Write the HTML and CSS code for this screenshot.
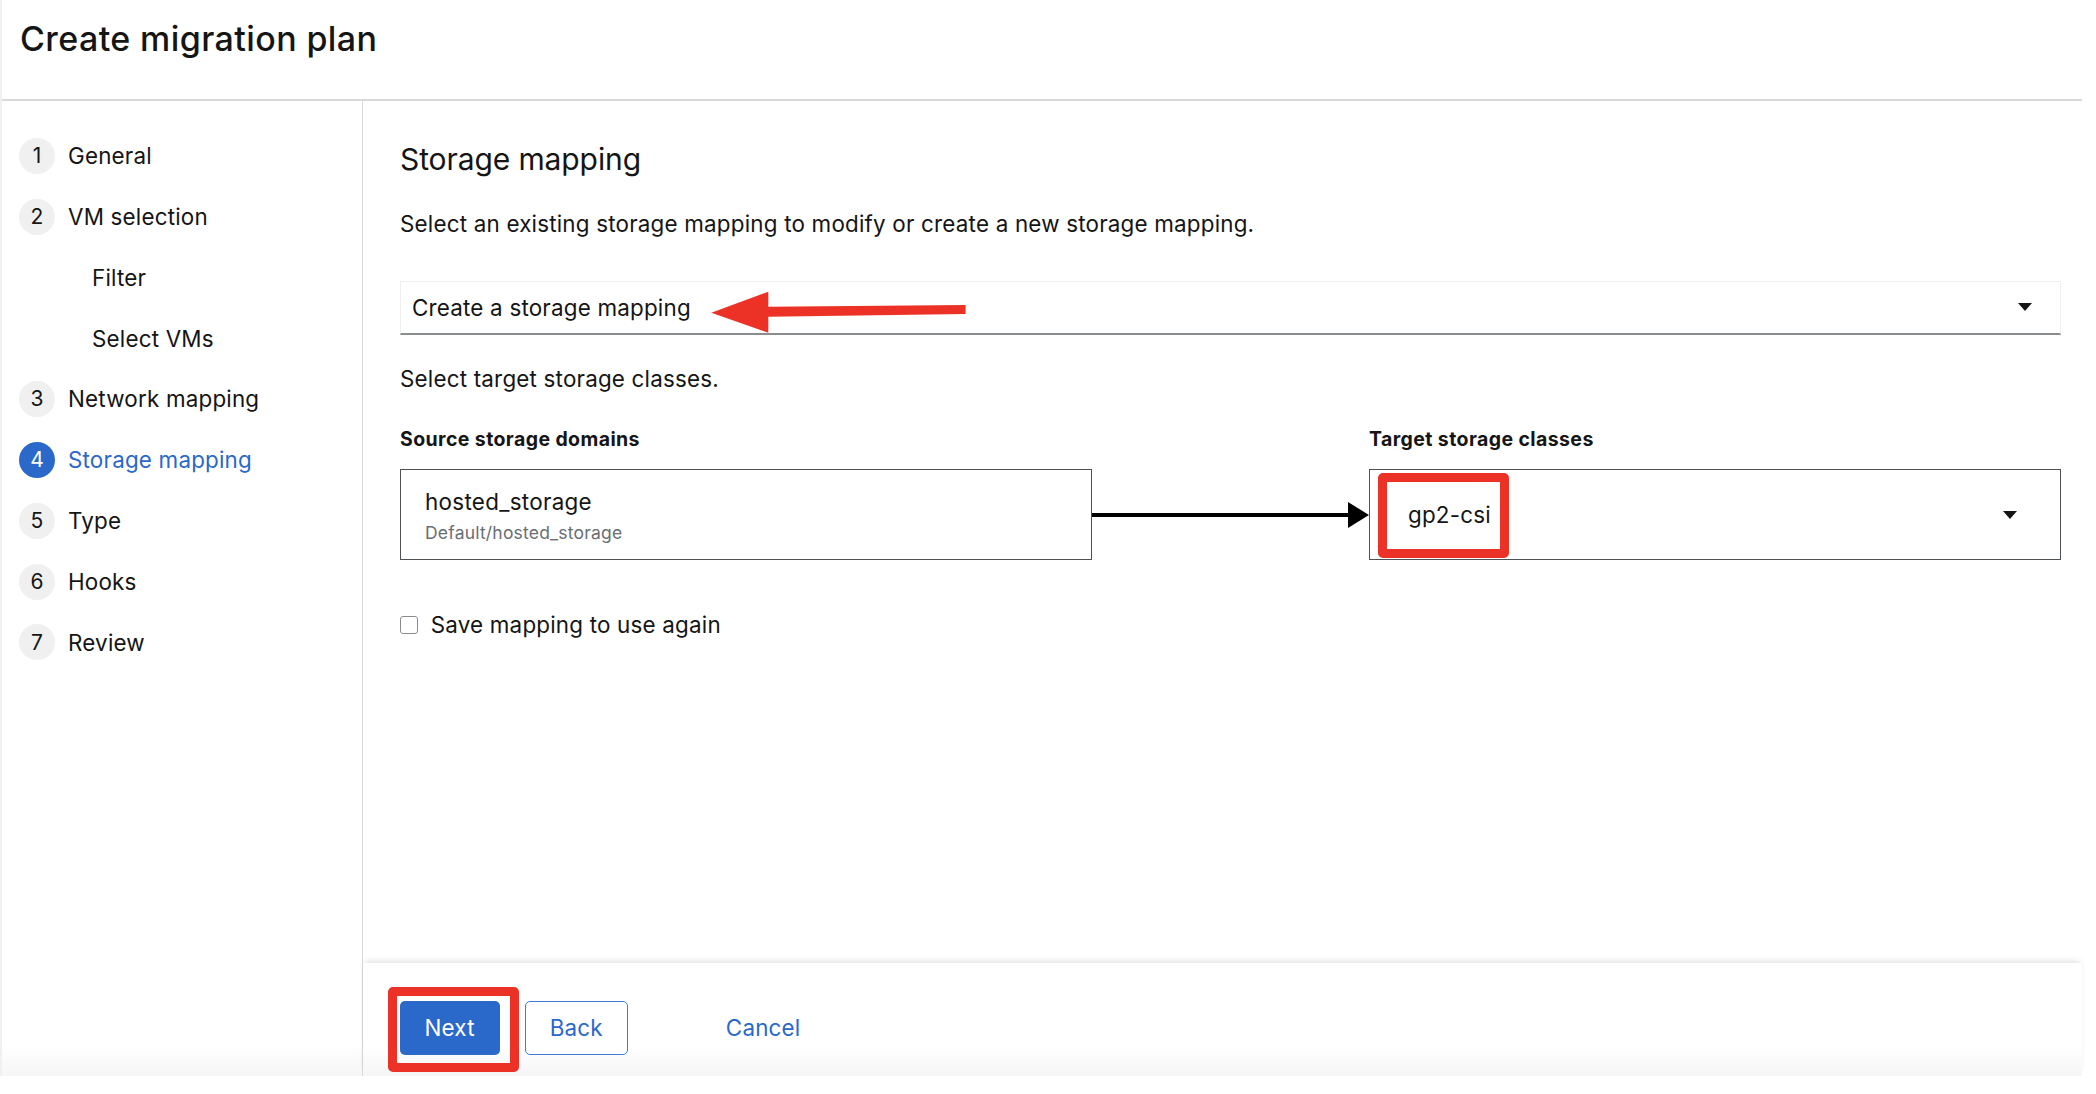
FILE: index.html
```html
<!DOCTYPE html>
<html lang="en">
<head>
<meta charset="utf-8">
<title>Create migration plan</title>
<link rel="stylesheet" href="styles.css">
</head>
<body>
<div class="app">
  <header class="page-header">
    <h1 class="page-title">Create migration plan</h1>
  </header>
  <div class="wizard">
    <nav class="wizard-nav">
      <ol class="nav-list">
        <li class="nav-item"><span class="nav-num">1</span><span class="nav-text">General</span></li>
        <li class="nav-item"><span class="nav-num">2</span><span class="nav-text">VM selection</span></li>
        <li class="nav-item nav-sub"><span class="nav-text">Filter</span></li>
        <li class="nav-item nav-sub"><span class="nav-text">Select VMs</span></li>
        <li class="nav-item"><span class="nav-num">3</span><span class="nav-text">Network mapping</span></li>
        <li class="nav-item is-current"><span class="nav-num">4</span><span class="nav-text">Storage mapping</span></li>
        <li class="nav-item"><span class="nav-num">5</span><span class="nav-text">Type</span></li>
        <li class="nav-item"><span class="nav-num">6</span><span class="nav-text">Hooks</span></li>
        <li class="nav-item"><span class="nav-num">7</span><span class="nav-text">Review</span></li>
      </ol>
    </nav>
    <div class="wizard-main">
      <section class="wizard-body">
        <h2 class="section-title">Storage mapping</h2>
        <p class="desc">Select an existing storage mapping to modify or create a new storage mapping.</p>
        <div class="select select-plain">
          <span class="select-text">Create a storage mapping</span>
          <span class="caret"></span>
          <svg class="callout-arrow" width="265" height="50" viewBox="0 0 265 50" aria-hidden="true">
            <polygon points="6.3,24.7 63.3,3.7 63.3,18.7 260.6,17 260.6,26 63.3,28.7 63.3,44.7" fill="#ec3226"/>
          </svg>
        </div>
        <p class="desc desc-tight">Select target storage classes.</p>
        <div class="mapping">
          <div class="mapping-label">Source storage domains</div>
          <div class="mapping-spacer"></div>
          <div class="mapping-label">Target storage classes</div>
          <div class="source-box">
            <div class="source-name">hosted_storage</div>
            <div class="source-path">Default/hosted_storage</div>
          </div>
          <div class="map-arrow">
            <svg width="277" height="26" viewBox="0 0 277 26" aria-hidden="true">
              <line x1="0" y1="13" x2="258" y2="13" stroke="#000" stroke-width="4"/>
              <polygon points="256,0 277,13 256,26" fill="#000"/>
            </svg>
          </div>
          <div class="select target-select">
            <span class="select-text">gp2-csi</span>
            <span class="caret"></span>
            <span class="callout-box callout-target"></span>
          </div>
        </div>
        <label class="check"><span class="checkbox"></span><span>Save mapping to use again</span></label>
      </section>
      <footer class="wizard-footer">
        <span class="btn-wrap">
          <button class="btn btn-primary" type="button">Next</button>
          <span class="callout-box callout-next"></span>
        </span>
        <button class="btn btn-secondary" type="button">Back</button>
        <button class="btn btn-link" type="button">Cancel</button>
      </footer>
    </div>
  </div>
</div>
</body>
</html>
```
FILE: styles.css
```css
* { box-sizing: border-box; }
html, body { margin: 0; padding: 0; background: #fff; }
body {
  font-family: Inter, "Noto Sans", sans-serif;
  color: #151515;
  font-size: 22.4px;
  line-height: 33.6px;
  letter-spacing: 0.2px;
}
.app {
  width: 2082px;
  height: 1076px;
  border-left: 2px solid #f0f0f0;
  display: flex;
  flex-direction: column;
}
.page-header {
  flex: none;
  height: 101px;
  border-bottom: 2px solid #d9d9d9;
  padding: 16.5px 0 0 18px;
}
.page-title {
  margin: 0;
  font-size: 34px;
  line-height: 44.2px;
  font-weight: 500;
  letter-spacing: 0.4px;
}
.wizard {
  flex: 1;
  display: grid;
  grid-template-columns: 361px 1fr;
  background: linear-gradient(to bottom, #fff calc(100% - 32px), #f6f6f6);
}
.wizard-nav {
  border-right: 1px solid #d9d9d9;
  padding: 37px 0 0 17px;
}
.nav-list {
  list-style: none;
  margin: 0;
  padding: 0;
  display: flex;
  flex-direction: column;
  gap: 24.8px;
}
.nav-item {
  display: flex;
  align-items: center;
  height: 36px;
  gap: 13px;
}
.nav-sub { padding-left: 73px; }
.nav-num {
  width: 36px;
  height: 36px;
  border-radius: 50%;
  background: #f0f0f0;
  display: flex;
  align-items: center;
  justify-content: center;
  font-size: 21px;
  letter-spacing: 0;
}
.is-current .nav-num { background: #2a68c9; color: #fff; }
.is-current .nav-text { color: #2a68c9; }

.wizard-main {
  display: flex;
  flex-direction: column;
  min-width: 0;
}
.wizard-body {
  flex: 1;
  padding: 38.6px 21px 0 37px;
}
.section-title {
  margin: 0;
  font-size: 30px;
  line-height: 39px;
  font-weight: 400;
  letter-spacing: -0.1px;
}
.desc { margin: 28px 0 0; }
.desc-tight { margin-top: 26.75px; }

.select {
  position: relative;
  display: flex;
  align-items: center;
  justify-content: space-between;
}
.select-plain {
  margin-top: 40.8px;
  padding: 8.7px 28px 8.7px 11px;
  border: 1px solid #f0f0f0;
  border-bottom: 2px solid #8a8d90;
}
.caret {
  width: 0;
  height: 0;
  border-left: 7px solid transparent;
  border-right: 7px solid transparent;
  border-top: 8px solid #151515;
}
.callout-arrow {
  position: absolute;
  left: 304px;
  top: 6px;
}

.mapping {
  margin-top: 30.2px;
  display: grid;
  grid-template-columns: 1fr 277px 1fr;
  row-gap: 15.25px;
}
.mapping-label {
  font-size: 19.5px;
  line-height: 28.5px;
  font-weight: 700;
  letter-spacing: 0.4px;
}
.source-box {
  border: 1px solid #4f5255;
  padding: 14.35px 24px 13.5px;
}
.source-name { line-height: 33.6px; letter-spacing: 0.3px; }
.source-path {
  margin-top: 2px;
  font-size: 17.5px;
  line-height: 25.5px;
  color: #6a6e73;
}
.map-arrow {
  display: flex;
  align-items: center;
}
.map-arrow svg { display: block; }
.target-select {
  border: 1px solid #4f5255;
  padding: 0 43px 0 38px;
}

.callout-box {
  position: absolute;
  border: 9px solid #ec3226;
  border-radius: 5px;
  pointer-events: none;
}
.callout-target { left: 8px; top: 3px; width: 131px; height: 85px; }
.callout-next { left: -12px; top: -14px; width: 131px; height: 85px; }

.check {
  margin-top: 48px;
  display: flex;
  align-items: center;
  gap: 12.7px;
}
.checkbox {
  width: 18px;
  height: 18px;
  border: 1px solid #8a8d90;
  border-radius: 3px;
  background: #fff;
}

.wizard-footer {
  flex: none;
  height: 113px;
  padding: 38px 0 0 36.5px;
  display: flex;
  align-items: flex-start;
  gap: 25px;
  box-shadow: 0 -4px 6px -2px rgba(0, 0, 0, 0.12);
}
.btn-wrap {
  position: relative;
  display: inline-flex;
}
.btn {
  font: inherit;
  font-size: 22.4px;
  line-height: 33.6px;
  letter-spacing: 0.2px;
  padding: 9.2px 24px;
  border: 1px solid transparent;
  border-radius: 5px;
  background: none;
  cursor: pointer;
}
.btn-primary { background: #2a68c9; color: #fff; }
.btn-secondary { border-color: #3f7bd3; color: #2a68c9; background: #fff; }
.btn-link { color: #2a68c9; margin-left: 48px; }
```
